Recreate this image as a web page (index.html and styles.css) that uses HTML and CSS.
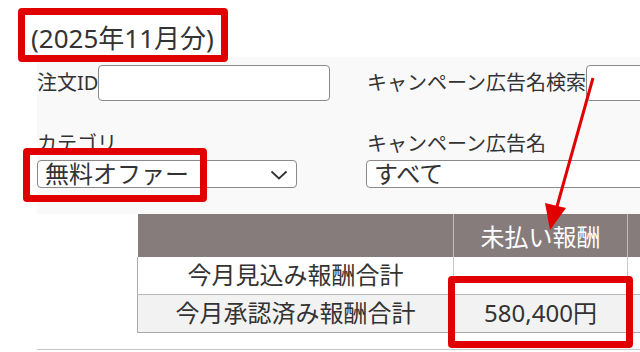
FILE: index.html
```html
<!DOCTYPE html>
<html lang="ja">
  <head>
    <meta charset="UTF-8" />
    <meta name="viewport" content="width=device-width, initial-scale=1.0" />
    <title>報酬一覧</title>
    <link rel="stylesheet" href="styles.css">
  </head>
  <body>
    <div class="period">(2025年11月分)</div>

    <div class="filters">
      <div class="field inline">
        <label>注文ID</label>
        <input type="text" class="text-input short" />
      </div>
      <div class="field inline">
        <label>キャンペーン広告名検索</label>
        <input type="text" class="text-input wide" />
      </div>
      <div class="field">
        <label>カテゴリ</label>
        <div class="select">
          <span>無料オファー</span>
          <svg class="chevron" width="18" height="10" viewBox="0 0 18 10">
            <path d="M1.5 1.5 L9 8.5 L16.5 1.5" fill="none" stroke="#333" stroke-width="1.8" />
          </svg>
        </div>
      </div>
      <div class="field">
        <label>キャンペーン広告名</label>
        <div class="select wide-select">
          <span>すべて</span>
        </div>
      </div>
    </div>

    <table class="summary">
      <thead>
        <tr>
          <th class="col-name"></th>
          <th class="col-value">未払い報酬</th>
          <th class="col-extra"></th>
        </tr>
      </thead>
      <tbody>
        <tr>
          <td>今月見込み報酬合計</td>
          <td></td>
          <td></td>
        </tr>
        <tr class="alt">
          <td>今月承認済み報酬合計</td>
          <td>580,400円</td>
          <td></td>
        </tr>
      </tbody>
    </table>

    <div class="divider"></div>

    <!-- annotations -->
    <div class="mark mark-period"></div>
    <div class="mark mark-category"></div>
    <div class="mark mark-amount"></div>
    <svg class="arrow" width="640" height="352" viewBox="0 0 640 352">
      <line x1="593" y1="78" x2="556" y2="210" stroke="#e00000" stroke-width="3" />
      <polygon points="550,230 545,203 566,208" fill="#e00000" />
    </svg>
  </body>
</html>
```

FILE: styles.css
```css
* {
  box-sizing: border-box;
}
html,
body {
  overflow: hidden;
}
body {
  margin: 0;
  width: 640px;
  height: 352px;
  position: relative;
  background: #fff;
  color: #333;
  font-family: "Noto Sans", "Noto Sans CJK JP", sans-serif;
}
.period {
  height: 57px;
  padding: 20px 0 0 31px;
  font-size: 26px;
  line-height: 36px;
}
.filters {
  margin-left: 37px;
  width: 603px;
  overflow: hidden;
  background: #f9f9f9;
  padding: 8px 0 26px 0;
  display: grid;
  grid-template-columns: 330px 1fr;
  row-gap: 31px;
}
.field {
  min-width: 0;
}
.field label {
  display: block;
  font-size: 20px;
  line-height: 24px;
  margin-bottom: 4px;
  white-space: nowrap;
}
.field.inline {
  display: flex;
  align-items: center;
}
.field.inline label {
  margin-bottom: 0;
}
.text-input {
  height: 36px;
  border: 1px solid #8a8a8a;
  border-radius: 4px;
  background: #fff;
  font-size: 20px;
  padding: 0 6px;
}
.text-input.short {
  width: 232px;
}
.text-input.wide {
  width: 80px;
  flex-shrink: 0;
}
.select {
  position: relative;
  width: 260px;
  height: 28px;
  border: 1px solid #8a8a8a;
  border-radius: 4px;
  background: #fff;
  font-size: 24px;
  line-height: 26px;
  padding-left: 7px;
  white-space: nowrap;
}
.select .chevron {
  position: absolute;
  right: 8px;
  top: 9px;
}
.wide-select {
  width: 300px;
  margin-left: -1px;
}
.summary {
  margin-left: 137px;
  border-collapse: collapse;
  table-layout: fixed;
  width: 503px;
  font-size: 24px;
}
.col-name {
  width: 316px;
}
.col-value {
  width: 174px;
}
.col-extra {
  width: 13px;
}
.summary th {
  height: 43px;
  background: #867c7c;
  color: #fff;
  font-weight: normal;
  border-left: 1px solid #c4bcbc;
}
.summary th:first-child {
  border-left: none;
}
.summary td {
  height: 37px;
  padding: 0;
  text-align: center;
  line-height: 1;
  white-space: nowrap;
  border-left: 1px solid #c8c8c8;
  border-bottom: 1px solid #b8b8b8;
}
.summary td:first-child {
  border-left: 1px solid #aaa;
}
.summary tr.alt td {
  background: #f2f2f2;
  height: 38px;
  border-bottom: 1px solid #a8a8a8;
}
.divider {
  margin: 16px 0 0 37px;
  width: 603px;
  border-top: 1px solid #c8c8c8;
}
.mark {
  position: absolute;
  border: 7px solid #e00000;
  border-radius: 4px;
}
.mark-period {
  left: 18px;
  top: 8px;
  width: 210px;
  height: 54px;
}
.mark-category {
  left: 23px;
  top: 148px;
  width: 184px;
  height: 54px;
}
.mark-amount {
  left: 448px;
  top: 276px;
  width: 185px;
  height: 72px;
}
.arrow {
  position: absolute;
  left: 0;
  top: 0;
}
```
